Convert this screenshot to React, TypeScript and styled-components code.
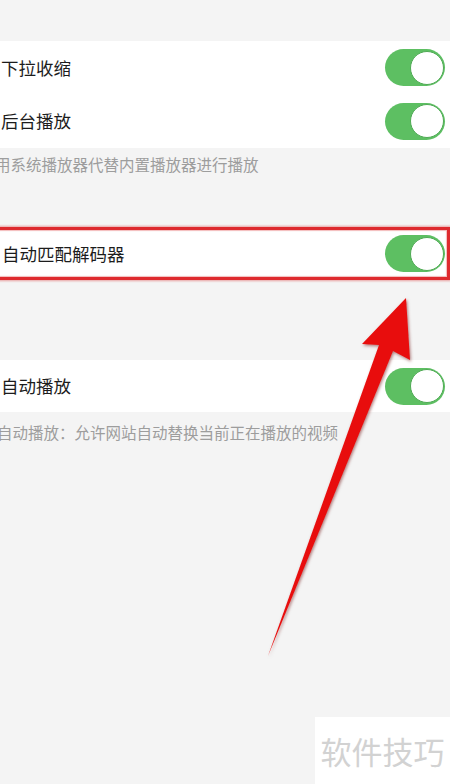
import React from 'react';
import styled, { createGlobalStyle } from 'styled-components';

const GlobalStyle = createGlobalStyle`
  html, body {
    margin: 0;
    padding: 0;
    background: #f4f4f4;
  }
  body {
    font-family: 'Noto Sans CJK SC', 'Noto Sans', sans-serif;
  }
`;

const Page = styled.div`
  position: relative;
  width: 450px;
  min-height: 784px;
  padding-top: 41px;
  box-sizing: border-box;
  background: #f4f4f4;
  overflow: hidden;
`;

const Group = styled.div<{ $gap?: number }>`
  background: #ffffff;
  margin-top: ${(p) => p.$gap ?? 0}px;
`;

const Row = styled.div<{ $h: number; $right?: number }>`
  display: flex;
  align-items: center;
  justify-content: space-between;
  height: ${(p) => p.$h}px;
  padding: 0 ${(p) => p.$right ?? 5}px 0 1px;
  box-sizing: border-box;
`;

const Label = styled.span`
  font-size: 17.5px;
  color: #1c1c1c;
  line-height: 1;
`;

const Hint = styled.div<{ $top: number; $shift: number }>`
  padding-top: ${(p) => p.$top}px;
  margin-left: ${(p) => p.$shift}px;
  font-size: 15.5px;
  line-height: 20px;
  color: #9d9d9d;
  white-space: nowrap;
`;

const Highlight = styled.div<{ $gap: number }>`
  margin-top: ${(p) => p.$gap}px;
  margin-left: -6px;
  border: 3px solid #de2a2e;
  border-left-width: 4px;
  box-shadow: 0 0 2px 1px rgba(220, 60, 60, 0.45), inset 0 0 1px 1px rgba(220, 60, 60, 0.35);
  background: #ffffff;
  padding-left: 3px;
`;

const Toggle = styled.div`
  position: relative;
  width: 60px;
  height: 37px;
  border-radius: 19px;
  background: #5dbf62;
  flex-shrink: 0;
`;

const Knob = styled.div`
  position: absolute;
  top: 1.5px;
  right: 1.5px;
  width: 34px;
  height: 34px;
  box-sizing: border-box;
  border-radius: 50%;
  background: #ffffff;
  border: 1.5px solid #4faa54;
`;

const Overlay = styled.svg`
  position: absolute;
  top: 0;
  left: 0;
  pointer-events: none;
`;

const Watermark = styled.div`
  position: absolute;
  right: 0;
  bottom: 0;
  width: 135px;
  height: 67px;
  background: #ffffff;
  display: flex;
  align-items: center;
  justify-content: center;
  font-size: 31px;
  color: #d2d2d2;
  letter-spacing: 0;
`;

const Switch = () => (
  <Toggle>
    <Knob />
  </Toggle>
);

const App = () => {
  return (
    <>
      <GlobalStyle />
      <Page>
        <Group>
          <Row $h={53}>
            <Label>下拉收缩</Label>
            <Switch />
          </Row>
          <Row $h={54}>
            <Label>后台播放</Label>
            <Switch />
          </Row>
        </Group>
        <Hint $top={6} $shift={-5}>用系统播放器代替内置播放器进行播放</Hint>

        <Highlight $gap={53}>
          <Row $h={47} $right={2}>
            <Label>自动匹配解码器</Label>
            <Switch />
          </Row>
        </Highlight>

        <Group $gap={80}>
          <Row $h={52}>
            <Label>自动播放</Label>
            <Switch />
          </Row>
        </Group>
        <Hint $top={10} $shift={-3}>自动播放：允许网站自动替换当前正在播放的视频</Hint>

        <Overlay width="450" height="784" viewBox="0 0 450 784">
          <defs>
            <filter id="arrowShadow" x="-20%" y="-20%" width="140%" height="140%">
              <feDropShadow dx="1" dy="1.5" stdDeviation="1.5" floodColor="#600" floodOpacity="0.5" />
            </filter>
          </defs>
          <polygon
            points="406,298 410,360 393,351 268,656 379,345 362,344"
            fill="#e8100f"
            filter="url(#arrowShadow)"
          />
        </Overlay>

        <Watermark>软件技巧</Watermark>
      </Page>
    </>
  );
};

export default App;
